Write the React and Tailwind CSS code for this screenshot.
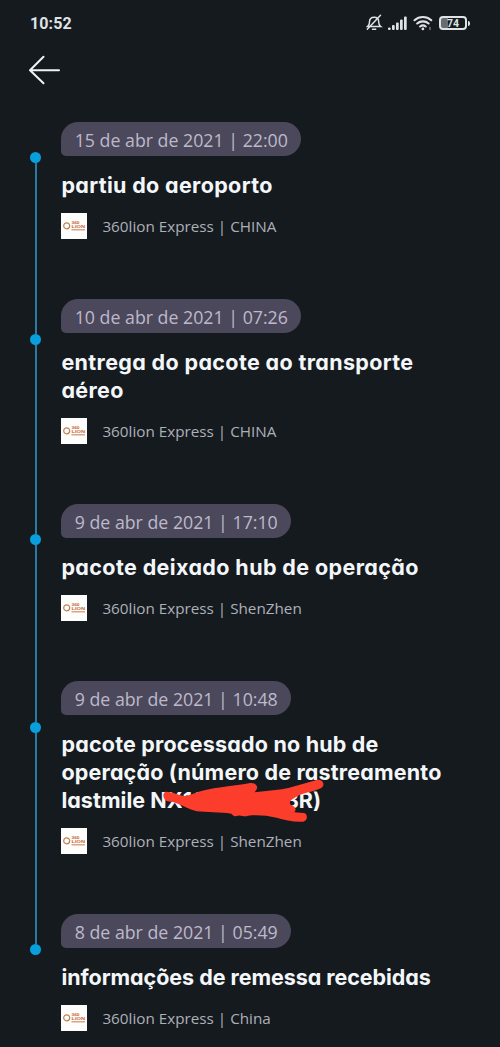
import React from 'react';
import clsx from 'clsx';

const events = [
   {
      date: '15 de abr de 2021 | 22:00',
      title: [{ text: 'partiu do aeroporto', className: 'tracking-[0.340px]' }],
      place: 'CHINA',
      dot: 'h-[30px]',
   },
   {
      date: '10 de abr de 2021 | 07:26',
      title: [
         { text: 'entrega do pacote ao transporte', className: 'tracking-[0.360px]' },
         { text: 'aéreo', className: 'tracking-[0.360px]' },
      ],
      place: 'CHINA',
      dot: 'h-[35px]',
   },
   {
      date: '9 de abr de 2021 | 17:10',
      title: [{ text: 'pacote deixado hub de operação', className: 'tracking-[0.390px]' }],
      place: 'ShenZhen',
      dot: 'h-[30px]',
   },
   {
      date: '9 de abr de 2021 | 10:48',
      title: [
         { text: 'pacote processado no hub de', className: 'tracking-[0.200px]' },
         { text: 'operação (número de rastreamento', className: 'tracking-[0.180px]' },
      ],
      code: true,
      place: 'ShenZhen',
      dot: 'h-[41px]',
   },
   {
      date: '8 de abr de 2021 | 05:49',
      title: [{ text: 'informações de remessa recebidas', className: 'tracking-[-0.050px]' }],
      place: 'China',
      dot: 'h-[30px]',
   },
];

const StatusBar = () => {
   return (
      <header className="flex h-[46px] items-center justify-between pl-[30px] pr-[30px] text-[#dfe3e5]">
         <span className="pt-px font-['Roboto',sans-serif] text-[16px] font-bold tracking-[0.100px]">10:52</span>
         <div className="flex items-center">
            <svg className="mb-[2px]" width="17" height="17" viewBox="0 0 17 17" fill="none" stroke="currentColor" strokeWidth="1.500" strokeLinecap="round">
               <path d="M1.500 12.600h13.200c-1.700-1.100-2-2-2-4.600 0-2.800-1.700-4.800-4.500-4.800S3.500 5.200 3.500 8c0 2.600-.4 3.500-2 4.600ZM6.500 15.200h3.200" />
               <path d="M14.500 1.200 1.300 15.200" />
            </svg>
            <svg className="ml-[5px]" width="19" height="15" viewBox="0 0 19 15" fill="currentColor">
               <rect x="0" y="11.500" width="2.700" height="2.500" rx="1" />
               <rect x="4" y="9" width="2.700" height="5" rx="1" />
               <rect x="8" y="6.500" width="2.700" height="7.500" rx="1" />
               <rect x="12" y="3.500" width="2.700" height="10.500" rx="1" />
               <rect x="16" y="0.500" width="2.700" height="13.500" rx="1" />
            </svg>
            <svg className="ml-[6px]" width="20" height="16" viewBox="0 0 20 16" fill="none" stroke="currentColor" strokeWidth="2.100" strokeLinecap="round">
               <path d="M1.500 5.200c4.800-4.300 12-4.300 16.800 0M4.200 8.500c3.300-2.900 8.200-2.900 11.400 0M7.100 11.500c1.800-1.400 3.900-1.400 5.600 0" />
               <circle cx="9.900" cy="13.900" r="1.400" fill="currentColor" stroke="none" />
               <path d="M17 12.500v2" strokeWidth="1.400" opacity="0.500" />
            </svg>
            <div className="ml-[6px] flex items-center">
               <span className="flex h-[14px] w-[28px] items-center justify-center rounded-[4px] border-2 border-current bg-linear-to-r from-[#686d70] from-30% to-transparent to-30% pt-[2px] font-['Roboto',sans-serif] text-[10.500px] leading-none font-bold">
                  74
               </span>
               <span className="ml-px h-[5px] w-[2px] rounded-r bg-current" />
            </div>
         </div>
      </header>
   );
};

const CarrierLogo = () => {
   return (
      <div className="flex size-[26px] shrink-0 items-center bg-[#fdfdfb] pb-px pl-[2px]">
         <svg width="23" height="12" viewBox="0 0 23 12" fill="none">
            <circle cx="3.700" cy="5.800" r="3" stroke="#b98256" strokeWidth="1.200" />
            <g fill="#c8622f" fontFamily="Liberation Sans, sans-serif" fontWeight="bold">
               <text x="8.500" y="4.200" fontSize="3.500" textLength="8" lengthAdjust="spacingAndGlyphs">
                  360
               </text>
               <text x="8.500" y="8.400" fontSize="3.500" textLength="13.500" lengthAdjust="spacingAndGlyphs">
                  LION
               </text>
            </g>
            <path d="M8.500 9.800h13.500" stroke="#d08f6c" strokeWidth="1.200" />
         </svg>
      </div>
   );
};

const Scribble = () => {
   return (
      <svg className="absolute top-[46px] left-[98.500px]" width="166" height="46" viewBox="330 138 498 138" fill="#fc3d2b">
         <path d="M346 185C365 184 382 194 403 198C425 195 435 188 457 182C510 169 560 168 600 159C616 157 625 168 620 178L614 187C650 181 690 180 718 173L800 150C817 146 828 164 814 174C790 186 758 188 738 201C725 208 714 216 722 224C734 228 742 238 733 247L762 249C776 253 772 275 757 275C729 276 702 270 680 263C650 256 620 254 594 257C582 263 572 252 560 258C550 261 548 253 544 251C510 246 470 247 440 244C417 238 395 225 372 217C359 214 351 215 346 210C338 202 338 190 346 185Z" />
      </svg>
   );
};

const EventTitle = ({ lines, code }) => {
   return (
      <h3 className="relative mt-[15px] font-['Inter',sans-serif] text-[21.500px] leading-[28px] font-bold whitespace-nowrap text-[#f4f7f9] [font-feature-settings:'cv11']">
         {lines.map(line => (
            <span key={line.text} className={clsx('block', line.className)}>
               {line.text}
            </span>
         ))}
         {code && (
            <span className="flex tracking-[0.050px]">
               lastmile NX10
               <span className="w-[78px]" />
               BR)
            </span>
         )}
         {code && <Scribble />}
      </h3>
   );
};

const TrackingEvent = ({ data, first, last }) => {
   return (
      <li className="flex">
         <div className="flex w-[11px] shrink-0 flex-col items-center">
            <span className={clsx('w-[2px]', data.dot, !first && 'bg-[#287ca4]')} />
            <span className="size-[11px] shrink-0 rounded-full bg-[#08a0dc]" />
            {!last && <span className="w-[2px] flex-1 bg-[#287ca4]" />}
         </div>
         <div className={clsx('ml-[20px] flex-1', !last && 'pb-[60px]')}>
            <time className="flex h-[34px] w-fit items-center rounded-[17px] rounded-bl-[5px] bg-[#4c485b] px-[13.300px] pt-px font-['Open_Sans',sans-serif] text-[17.750px] whitespace-nowrap text-[#bdb9cb]">
               {data.date}
            </time>
            <EventTitle lines={data.title} code={data.code} />
            <div className="mt-[14px] flex items-center gap-[15px]">
               <CarrierLogo />
               <p className="pt-px font-['Open_Sans',sans-serif] text-[15.250px] whitespace-nowrap text-[#adb0b8]">360lion Express | {data.place}</p>
            </div>
         </div>
      </li>
   );
};

export default function App() {
   return (
      <main className="h-[1047px] w-[500px] overflow-hidden bg-[#151a1f]">
         <StatusBar />
         <button className="mt-[9px] ml-[28px] block" aria-label="Voltar">
            <svg width="33" height="30" viewBox="0 0 33 30" fill="none" stroke="#f0f3f4" strokeWidth="2" strokeLinecap="round" strokeLinejoin="round">
               <path d="M31 15.300H2M15.500 1.800 2 15.300l13.500 13" />
            </svg>
         </button>
         <ul className="pt-[37.400px] pl-[30.400px]">
            {events.map((item, i) => (
               <TrackingEvent key={item.date} data={item} first={i === 0} last={i === events.length - 1} />
            ))}
         </ul>
      </main>
   );
}
